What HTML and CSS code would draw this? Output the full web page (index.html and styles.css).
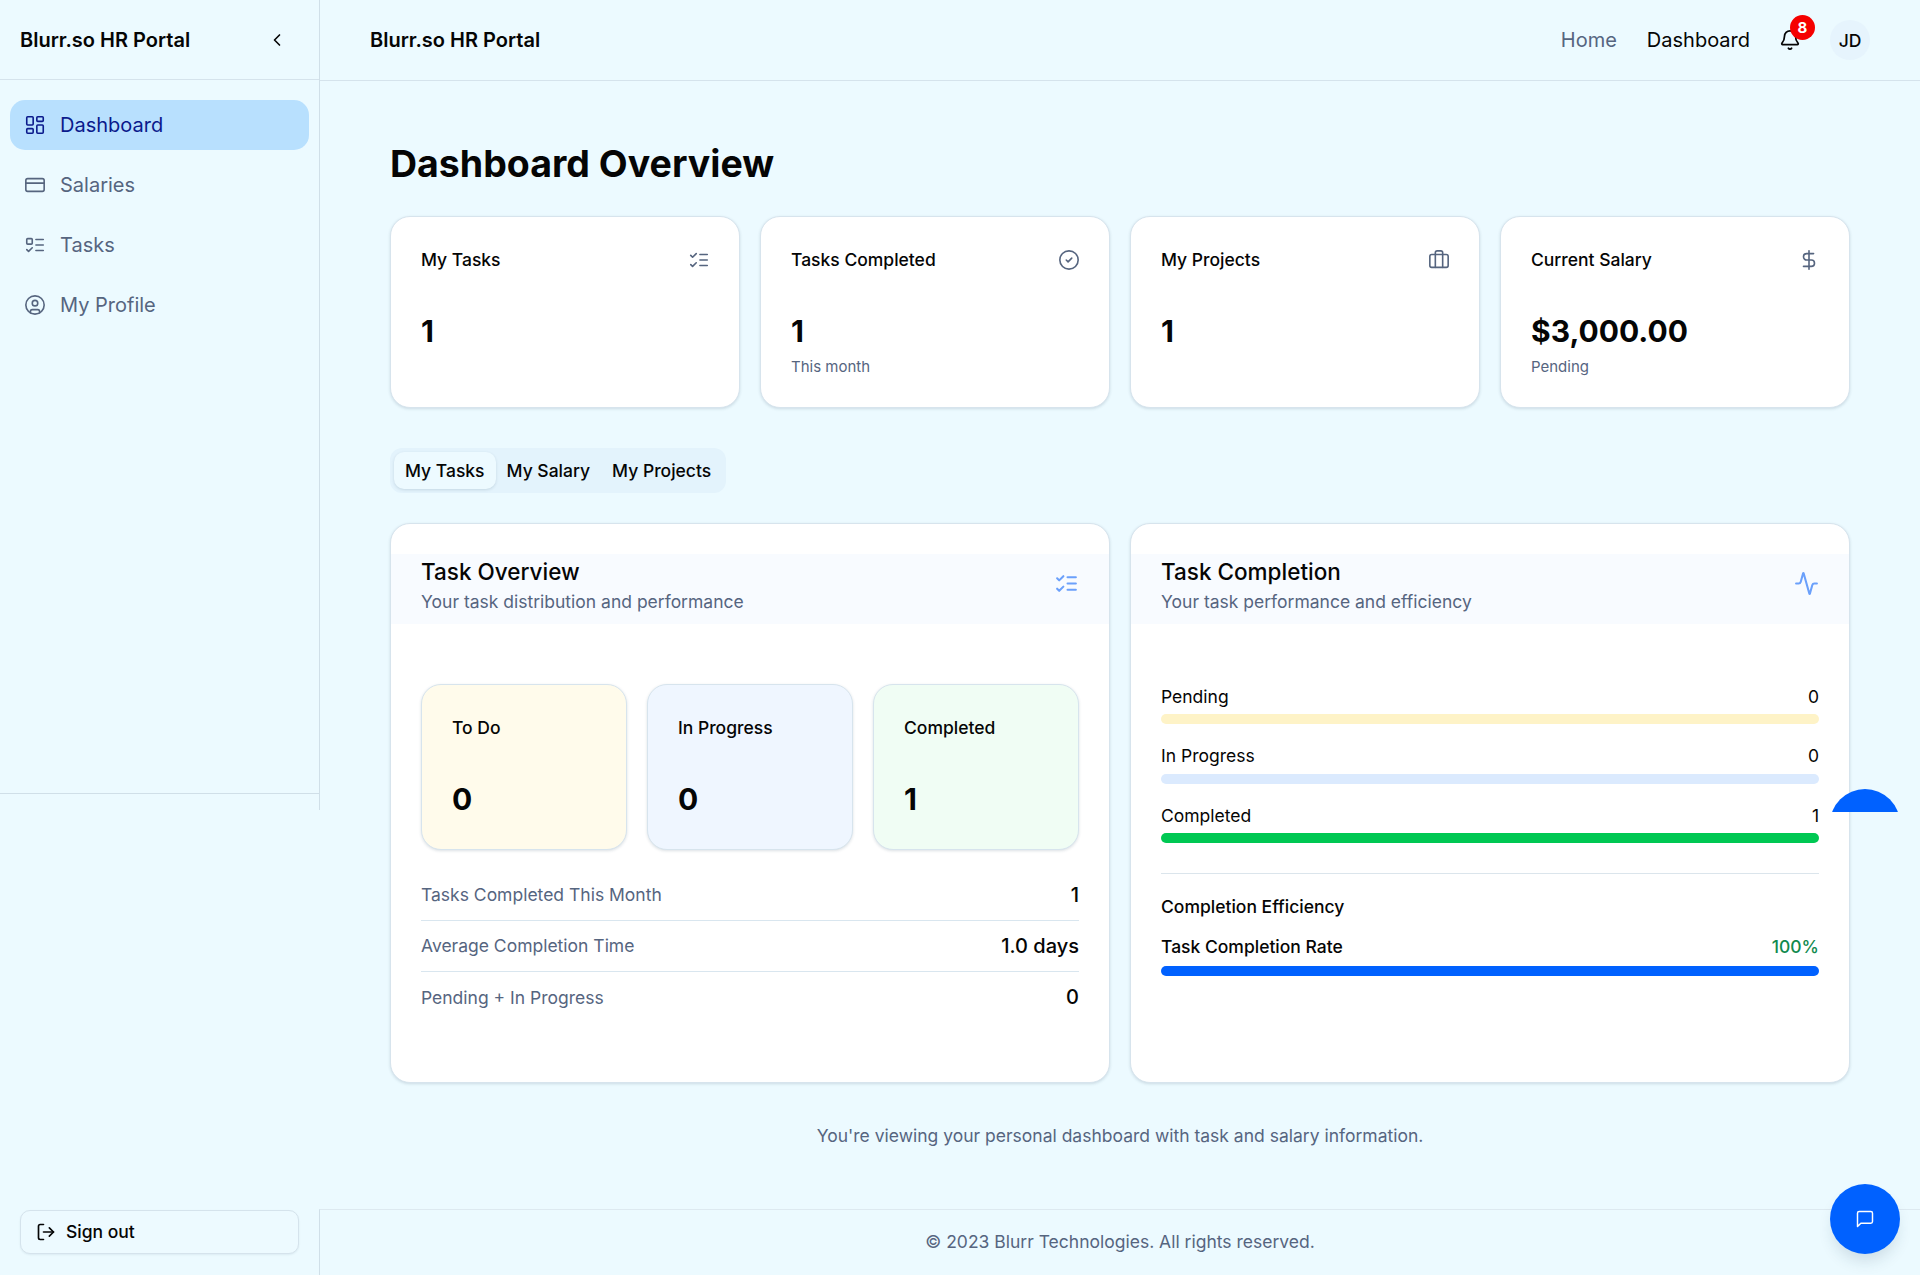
FILE: index.html
```html
<!DOCTYPE html>
<html lang="en">
<head>
<meta charset="utf-8">
<title>Blurr.so HR Portal</title>
<link rel="stylesheet" href="styles.css">
</head>
<body>
<div class="app">
  <aside class="sidebar">
    <div class="side-top">
      <div class="side-head">
        <span class="brand">Blurr.so HR Portal</span>
        <svg class="ico chevron" viewBox="0 0 24 24"><path d="m15 18-6-6 6-6"/></svg>
      </div>
      <nav class="side-nav">
        <a class="nav-item active"><svg class="ico nav-ico" viewBox="0 0 24 24"><rect width="7" height="9" x="3" y="3" rx="1"/><rect width="7" height="5" x="14" y="3" rx="1"/><rect width="7" height="9" x="14" y="12" rx="1"/><rect width="7" height="5" x="3" y="16" rx="1"/></svg>Dashboard</a>
        <a class="nav-item"><svg class="ico nav-ico" viewBox="0 0 24 24"><rect width="20" height="14" x="2" y="5" rx="2"/><line x1="2" x2="22" y1="10" y2="10"/></svg>Salaries</a>
        <a class="nav-item"><svg class="ico nav-ico" viewBox="0 0 24 24"><rect x="3" y="5" width="6" height="6" rx="1"/><path d="m3 17 2 2 4-4"/><path d="M13 6h8"/><path d="M13 12h8"/><path d="M13 18h8"/></svg>Tasks</a>
        <a class="nav-item"><svg class="ico nav-ico" viewBox="0 0 24 24"><circle cx="12" cy="12" r="10"/><circle cx="12" cy="10" r="3"/><path d="M7 20.662V19a2 2 0 0 1 2-2h6a2 2 0 0 1 2 2v1.662"/></svg>My Profile</a>
      </nav>
    </div>
    <div class="side-foot">
      <button class="signout"><svg class="ico signout-ico" viewBox="0 0 24 24"><path d="M9 21H5a2 2 0 0 1-2-2V5a2 2 0 0 1 2-2h4"/><polyline points="16 17 21 12 16 7"/><line x1="21" x2="9" y1="12" y2="12"/></svg>Sign out</button>
    </div>
  </aside>

  <div class="main">
    <header class="topbar">
      <span class="brand">Blurr.so HR Portal</span>
      <div class="top-right">
        <a class="top-link muted">Home</a>
        <a class="top-link">Dashboard</a>
        <span class="bell">
          <svg class="ico bell-ico" viewBox="0 0 24 24"><path d="M10.268 21a2 2 0 0 0 3.464 0"/><path d="M3.262 15.326A1 1 0 0 0 4 17h16a1 1 0 0 0 .74-1.673C19.41 13.956 18 12.499 18 8A6 6 0 0 0 6 8c0 4.499-1.411 5.956-2.738 7.326"/></svg>
          <span class="badge">8</span>
        </span>
        <span class="avatar">JD</span>
      </div>
    </header>

    <main class="content">
      <h1 class="page-title">Dashboard Overview</h1>

      <section class="stats">
        <div class="card stat">
          <div class="stat-head"><span class="stat-title">My Tasks</span><svg class="ico card-ico" viewBox="0 0 24 24"><path d="m3 17 2 2 4-4"/><path d="m3 7 2 2 4-4"/><path d="M13 6h8"/><path d="M13 12h8"/><path d="M13 18h8"/></svg></div>
          <div class="stat-value">1</div>
        </div>
        <div class="card stat">
          <div class="stat-head"><span class="stat-title">Tasks Completed</span><svg class="ico card-ico" viewBox="0 0 24 24"><circle cx="12" cy="12" r="10"/><path d="m9 12 2 2 4-4"/></svg></div>
          <div class="stat-value">1</div>
          <div class="stat-sub">This month</div>
        </div>
        <div class="card stat">
          <div class="stat-head"><span class="stat-title">My Projects</span><svg class="ico card-ico" viewBox="0 0 24 24"><path d="M16 20V4a2 2 0 0 0-2-2h-4a2 2 0 0 0-2 2v16"/><rect width="20" height="14" x="2" y="6" rx="2"/></svg></div>
          <div class="stat-value">1</div>
        </div>
        <div class="card stat">
          <div class="stat-head"><span class="stat-title">Current Salary</span><svg class="ico card-ico" viewBox="0 0 24 24"><line x1="12" x2="12" y1="2" y2="22"/><path d="M17 5H9.5a3.5 3.5 0 0 0 0 7h5a3.5 3.5 0 0 1 0 7H6"/></svg></div>
          <div class="stat-value">$3,000.00</div>
          <div class="stat-sub">Pending</div>
        </div>
      </section>

      <div class="tabs">
        <span class="tab tab-active">My Tasks</span>
        <span class="tab">My Salary</span>
        <span class="tab">My Projects</span>
      </div>

      <section class="panels">
        <div class="card panel">
          <div class="panel-head">
            <div>
              <div class="panel-title">Task Overview</div>
              <div class="panel-sub">Your task distribution and performance</div>
            </div>
            <svg class="ico panel-ico" viewBox="0 0 24 24"><path d="m3 17 2 2 4-4"/><path d="m3 7 2 2 4-4"/><path d="M13 6h8"/><path d="M13 12h8"/><path d="M13 18h8"/></svg>
          </div>
          <div class="panel-body">
            <div class="mini-grid">
              <div class="card stat mini mini-yellow"><div class="stat-head"><span class="stat-title">To Do</span></div><div class="stat-value">0</div></div>
              <div class="card stat mini mini-blue"><div class="stat-head"><span class="stat-title">In Progress</span></div><div class="stat-value">0</div></div>
              <div class="card stat mini mini-green"><div class="stat-head"><span class="stat-title">Completed</span></div><div class="stat-value">1</div></div>
            </div>
            <div class="rows">
              <div class="row"><span class="row-label">Tasks Completed This Month</span><span class="row-value">1</span></div>
              <div class="row"><span class="row-label">Average Completion Time</span><span class="row-value">1.0 days</span></div>
              <div class="row"><span class="row-label">Pending + In Progress</span><span class="row-value">0</span></div>
            </div>
          </div>
        </div>

        <div class="card panel">
          <div class="panel-head">
            <div>
              <div class="panel-title">Task Completion</div>
              <div class="panel-sub">Your task performance and efficiency</div>
            </div>
            <svg class="ico panel-ico" viewBox="0 0 24 24"><path d="M22 12h-2.48a2 2 0 0 0-1.93 1.46l-2.35 8.36a.25.25 0 0 1-.48 0L9.24 2.18a.25.25 0 0 0-.48 0l-2.35 8.36A2 2 0 0 1 4.49 12H2"/></svg>
          </div>
          <div class="panel-body panel-body-meters">
            <div class="meter"><div class="meter-top"><span>Pending</span><span>0</span></div><div class="bar bar-yellow"></div></div>
            <div class="meter"><div class="meter-top"><span>In Progress</span><span>0</span></div><div class="bar bar-blue"></div></div>
            <div class="meter"><div class="meter-top"><span>Completed</span><span>1</span></div><div class="bar bar-green"></div></div>
            <div class="efficiency">
              <div class="eff-title">Completion Efficiency</div>
              <div class="meter-top eff-top"><span>Task Completion Rate</span><span class="eff-rate">100%</span></div>
              <div class="bar bar-strong"></div>
            </div>
          </div>
        </div>
      </section>

      <p class="note">You're viewing your personal dashboard with task and salary information.</p>
    </main>

    <footer class="footer">© 2023 Blurr Technologies. All rights reserved.</footer>
  </div>
</div>

<div class="clipped-dot"><div class="clipped-dot-inner"></div></div>
<button class="fab"><svg class="ico fab-ico" viewBox="0 0 24 24"><path d="M21 15a2 2 0 0 1-2 2H7l-4 4V5a2 2 0 0 1 2-2h14a2 2 0 0 1 2 2z"/></svg></button>
</body>
</html>
```
FILE: styles.css
```css
* { box-sizing: border-box; }
html, body { margin: 0; padding: 0; height: 100%; }
body {
  background: #ecfaff;
  color: #050505;
  font-family: Inter, "Liberation Sans", sans-serif;
  font-size: 20px;
  overflow: hidden;
}
.ico {
  fill: none;
  stroke: currentColor;
  stroke-width: 2;
  stroke-linecap: round;
  stroke-linejoin: round;
  flex: none;
  display: block;
}
.app { display: flex; height: 1275px; }

/* Sidebar */
.sidebar { width: 320px; flex: none; display: flex; flex-direction: column; }
.side-top {
  height: 810px;
  display: flex;
  flex-direction: column;
  border-right: 1px solid #d0dfe8;
  padding-bottom: 16px;
}
.side-head {
  height: 80px;
  flex: none;
  display: flex;
  align-items: center;
  justify-content: space-between;
  padding: 0 32px 0 20px;
  border-bottom: 1px solid #d5e3ec;
}
.brand { font-size: 20px; font-weight: 600; line-height: 30px; }
.chevron { width: 20px; height: 20px; stroke-width: 2; }
.side-nav {
  flex: 1;
  display: flex;
  flex-direction: column;
  gap: 10px;
  padding: 20px 10px;
  border-bottom: 1px solid #d0dfe8;
}
.nav-item {
  height: 50px;
  display: flex;
  align-items: center;
  gap: 14px;
  padding-left: 14px;
  border-radius: 15px;
  color: #56657f;
  font-size: 20px;
}
.nav-item.active { background: #b8e0fe; color: #0b1a8c; }
.nav-ico { width: 22px; height: 22px; stroke-width: 1.75; }
.side-foot { margin-top: auto; padding: 0 21px 21.5px 20px; }
.signout {
  width: 100%;
  height: 44px;
  display: flex;
  align-items: center;
  gap: 10px;
  padding: 0 15px;
  background: #edfaff;
  border: 1px solid #d5e3ec;
  border-radius: 10px;
  box-shadow: 0 1px 2px rgba(30, 60, 90, .08);
  font: 500 17.5px/25px Inter, sans-serif;
  color: #050505;
}
.signout-ico { width: 20px; height: 20px; }

/* Main */
.main { flex: 1; min-width: 0; display: flex; flex-direction: column; }
.topbar {
  height: 81px;
  flex: none;
  display: flex;
  align-items: center;
  justify-content: space-between;
  padding: 0 50px;
  border-bottom: 1px solid #d5e3ec;
}
.top-right { display: flex; align-items: center; gap: 30px; }
.top-link { font-size: 20px; line-height: 30px; }
.top-link.muted { color: #56657f; }
.bell { position: relative; width: 20px; height: 22px; display: block; }
.bell-ico { width: 22px; height: 22px; margin-left: -1px; stroke-width: 1.9; }
.badge {
  position: absolute;
  left: 10px;
  top: -14px;
  width: 25px;
  height: 25px;
  border-radius: 50%;
  background: #f50000;
  color: #fff;
  font-size: 15px;
  font-weight: 700;
  line-height: 25px;
  text-align: center;
}
.avatar {
  width: 40px;
  height: 40px;
  border-radius: 50%;
  background: #e6f4fd;
  display: flex;
  align-items: center;
  justify-content: center;
  font-size: 17.5px;
  font-weight: 500;
}

.content { flex: 1; padding: 60px 70px 0; }
.page-title { margin: 0 0 30px; font-size: 37.5px; line-height: 45px; font-weight: 700; }

.card {
  background: #fff;
  border: 1px solid #d7e4ed;
  border-radius: 20px;
  box-shadow: 0 1px 3px rgba(30, 60, 90, .16);
}
.stats { display: grid; grid-template-columns: repeat(4, 1fr); gap: 20px; }
.stat { padding: 30px; height: 192px; }
.stat-head { display: flex; align-items: flex-start; justify-content: space-between; height: 25px; }
.stat-title { font-size: 17.5px; line-height: 25px; font-weight: 500; }
.card-ico { width: 22px; height: 22px; margin: 1.5px -1px 0 0; color: #56657f; stroke-width: 1.75; }
.stat-value { margin-top: 39px; font-size: 30px; line-height: 40px; font-weight: 700; }
.stat-sub { margin-top: 6px; font-size: 15px; line-height: 20px; color: #56657f; }

.tabs {
  display: inline-flex;
  margin: 40px 0 30px;
  padding: 4px;
  height: 45px;
  background: #e3f3fc;
  border-radius: 12px;
  vertical-align: top;
}
.tab { padding: 0 11px; font-size: 17.5px; line-height: 37px; font-weight: 500; }
.tab-active { background: #edfaff; border-radius: 10px; box-shadow: 0 1px 3px rgba(30, 60, 90, .15); }

.panels { display: grid; grid-template-columns: 1fr 1fr; gap: 20px; }
.panel { height: 560px; padding-top: 30px; overflow: hidden; }
.panel-head {
  height: 70px;
  display: flex;
  align-items: center;
  justify-content: space-between;
  padding: 0 30px 10px;
  background: #f8fbff;
}
.panel-title { font-size: 22.5px; line-height: 35px; font-weight: 500; }
.panel-sub { font-size: 17.5px; line-height: 25px; color: #56657f; }
.panel-ico { width: 25px; height: 25px; color: #6ba0fb; margin-top: -1px; }
.panel-body { padding: 60px 30px 0; }
.panel-body-meters { padding-top: 60.5px; }
.mini-grid { display: grid; grid-template-columns: repeat(3, 1fr); gap: 20px; }
.mini { height: 166px; }
.mini-yellow { background: #fffbeb; }
.mini-blue { background: #eff6ff; }
.mini-green { background: #f0fdf4; }
.rows { margin-top: 20px; }
.row {
  display: flex;
  align-items: center;
  justify-content: space-between;
  height: 51px;
  border-bottom: 1px solid #d9e6ef;
}
.row:last-child { border-bottom: 0; }
.row-label { font-size: 17.5px; line-height: 25px; color: #56657f; margin-bottom: 1px; }
.row-value { font-size: 20px; line-height: 25px; font-weight: 500; }

.meter { margin-bottom: 20px; }
.meter-top {
  display: flex;
  justify-content: space-between;
  font-size: 17.5px;
  line-height: 24px;
  margin-bottom: 5.5px;
}
.bar { height: 10px; border-radius: 5px; }
.bar-yellow { background: #fef3c7; }
.bar-blue { background: #dbeafe; }
.bar-green { background: #00c853; }
.bar-strong { background: #0061ff; }
.efficiency { margin-top: 30px; padding-top: 20px; border-top: 1px solid #dbe5ec; }
.eff-title { font-size: 17.5px; line-height: 25px; font-weight: 500; margin-bottom: 15px; }
.eff-top { font-weight: 500; line-height: 25px; margin-bottom: 6.5px; }
.eff-rate { color: #118a4e; }

.note { margin: 40px 0 0; text-align: center; font-size: 17.5px; line-height: 25px; color: #56657f; }
.footer {
  flex: none;
  height: 66px;
  margin-left: -1px;
  padding-bottom: 2px;
  border-top: 1px solid #dde9f0;
  border-left: 1px solid #d0dfe8;
  display: flex;
  align-items: center;
  justify-content: center;
  font-size: 17.5px;
  color: #56657f;
}

/* Floating */
.clipped-dot { position: fixed; left: 1830px; top: 789px; width: 70px; height: 23px; overflow: hidden; }
.clipped-dot-inner { width: 70px; height: 70px; border-radius: 50%; background: #0061ff; }
.fab {
  position: fixed;
  left: 1830px;
  top: 1184px;
  width: 70px;
  height: 70px;
  border: 0;
  padding: 0;
  border-radius: 50%;
  background: #0061ff;
  color: #fff;
  display: flex;
  align-items: center;
  justify-content: center;
  box-shadow: 0 10px 15px -3px rgba(30, 60, 90, .15);
}
.fab-ico { width: 20px; height: 20px; stroke-width: 1.75; }
```
